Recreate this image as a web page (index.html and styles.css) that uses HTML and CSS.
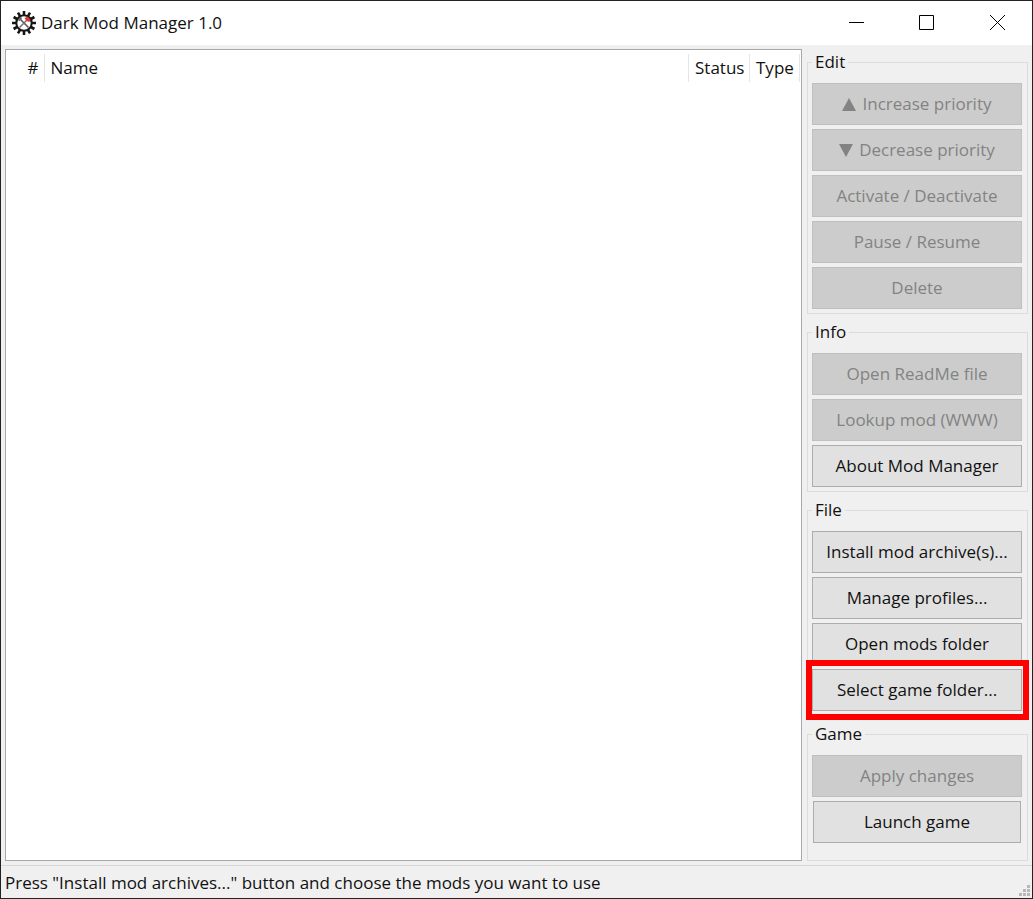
FILE: index.html
```
<!DOCTYPE html>
<html lang="en">
<head>
<meta charset="utf-8">
<title>Dark Mod Manager 1.0</title>
<link rel="stylesheet" href="styles.css">
</head>
<body>
<div class="window">
  <header class="titlebar">
    <svg class="app-icon" viewBox="0 0 24 24" aria-hidden="true">
      <g stroke="#151515" stroke-width="2.600">
        <path d="M12 0V24M0 12H24"/>
        <path d="M12 0V24M0 12H24" transform="rotate(30 12 12)"/>
        <path d="M12 0V24M0 12H24" transform="rotate(60 12 12)"/>
      </g>
      <circle cx="12" cy="12" r="7.700" fill="#fff" stroke="#151515" stroke-width="2"/>
      <path d="M8 8L16.500 16.500" stroke="#555" stroke-width="1.600"/>
      <path d="M15 9L7.500 16.500" stroke="#777" stroke-width="1.600"/>
      <path d="M6.500 9.500L9.500 6.500" stroke="#666" stroke-width="2"/>
      <path d="M12.500 7L15.500 5.500L18.500 8.500L17.500 11L14.500 10Z" fill="#d8392f"/>
    </svg>
    <h1 class="title">Dark Mod Manager 1.0</h1>
    <div class="controls">
      <button class="control" aria-label="Minimize"><svg viewBox="0 0 16 16"><path d="M0 7.500H15"/></svg></button>
      <button class="control" aria-label="Maximize"><svg viewBox="0 0 16 16"><path d="M.5 .5H14.500V14.500H.5Z"/></svg></button>
      <button class="control" aria-label="Close"><svg viewBox="0 0 16 16"><path d="M1 0L16 15M16 0L1 15"/></svg></button>
    </div>
  </header>
  <main class="content">
    <section class="list">
      <table class="mods">
        <thead><tr><th class="num">#</th><th>Name</th><th class="status">Status</th><th class="type">Type</th></tr></thead>
      </table>
    </section>
    <aside class="sidebar">
      <fieldset class="group">
        <legend>Edit</legend>
        <button class="btn" disabled><svg class="arrow" viewBox="0 0 14 13"><path d="M7 0L14 13H0Z"/></svg>Increase priority</button>
        <button class="btn" disabled><svg class="arrow" viewBox="0 0 14 13"><path d="M0 0H14L7 13Z"/></svg>Decrease priority</button>
        <button class="btn" disabled>Activate / Deactivate</button>
        <button class="btn" disabled>Pause / Resume</button>
        <button class="btn" disabled>Delete</button>
      </fieldset>
      <fieldset class="group">
        <legend>Info</legend>
        <button class="btn" disabled>Open ReadMe file</button>
        <button class="btn" disabled>Lookup mod (WWW)</button>
        <button class="btn">About Mod Manager</button>
      </fieldset>
      <fieldset class="group">
        <legend>File</legend>
        <button class="btn">Install mod archive(s)...</button>
        <button class="btn">Manage profiles...</button>
        <button class="btn">Open mods folder</button>
        <button class="btn highlighted">Select game folder...</button>
      </fieldset>
      <fieldset class="group fill">
        <legend>Game</legend>
        <button class="btn" disabled>Apply changes</button>
        <button class="btn inset">Launch game</button>
      </fieldset>
    </aside>
  </main>
  <footer class="statusbar">
    <span>Press "Install mod archives..." button and choose the mods you want to use</span>
    <svg class="grip" viewBox="0 0 11 11" aria-hidden="true"><path d="M8 0h3v3h-3zM4 4h3v3h-3zM8 4h3v3h-3zM0 8h3v3h-3zM4 8h3v3h-3zM8 8h3v3h-3z"/></svg>
  </footer>
</div>
</body>
</html>
```
FILE: styles.css
```
* { box-sizing: border-box; }
body {
  margin: 0;
  font: 17px/24px "Open Sans", "Noto Sans", sans-serif;
  color: #111;
}
button { font: inherit; color: inherit; }
.window {
  display: flex;
  flex-direction: column;
  min-height: 100vh;
  border: 1px solid #222;
  background: #f0f0f0;
}
.titlebar {
  display: flex;
  align-items: center;
  height: 44px;
  padding-left: 11px;
  background: #fff;
}
.app-icon { width: 24px; height: 24px; }
.title { flex: 1; margin: 0 0 0 5px; font-size: 17px; font-weight: 400; }
.controls { display: flex; }
.control {
  width: 70px;
  height: 44px;
  padding: 0;
  border: 0;
  background: none;
}
.control svg { display: block; width: 16px; height: 16px; margin: auto; fill: none; stroke: #000; }
.content { display: flex; flex: 1; gap: 5px; padding: 4px 4px 4px; }
.list { flex: 1; padding: 4px 1px; border: 1px solid #a5a9ad; background: #fff; }
.mods { width: 100%; border-collapse: collapse; table-layout: fixed; }
.mods th {
  height: 28px;
  padding: 0 6px;
  border-right: 1px solid #e5e5e5;
  font-weight: 400;
  line-height: 22px;
  text-align: left;
}
.mods .num { width: 37px; padding: 0 5px; text-align: right; }
.mods .status { width: 61px; }
.mods .type { width: 50px; }
.sidebar { display: flex; flex-direction: column; gap: 6px; width: 221px; padding-top: 1px; }
.group {
  display: flex;
  flex-direction: column;
  gap: 4px;
  min-width: 0;
  margin: 0;
  padding: 9px 5px 4px 4px;
  border: 1px solid #dcdcdc;
}
.group legend { padding: 0 3px; }
.fill { flex: 1; }
.btn {
  display: flex;
  align-items: center;
  justify-content: center;
  gap: 6px;
  height: 42px;
  padding: 0;
  border: 1px solid #adadad;
  background: #e1e1e1;
  white-space: nowrap;
}
.btn:disabled { border-color: #bfbfbf; background: #ccc; color: #838383; }
.arrow { width: 14px; height: 13px; fill: currentColor; }
.inset { margin: 0 1px; }
.highlighted { position: relative; }
.highlighted::after {
  content: "";
  position: absolute;
  inset: -10px -8px -10px -7px;
  border: 6px solid #f00;
}
.statusbar {
  display: flex;
  align-items: center;
  justify-content: space-between;
  height: 33px;
  padding: 2px 2px 0 4px;
  border-top: 1px solid #d7d7d7;
}
.grip { align-self: flex-end; width: 11px; height: 11px; margin-bottom: 2px; fill: #b8b8b8; }
```
